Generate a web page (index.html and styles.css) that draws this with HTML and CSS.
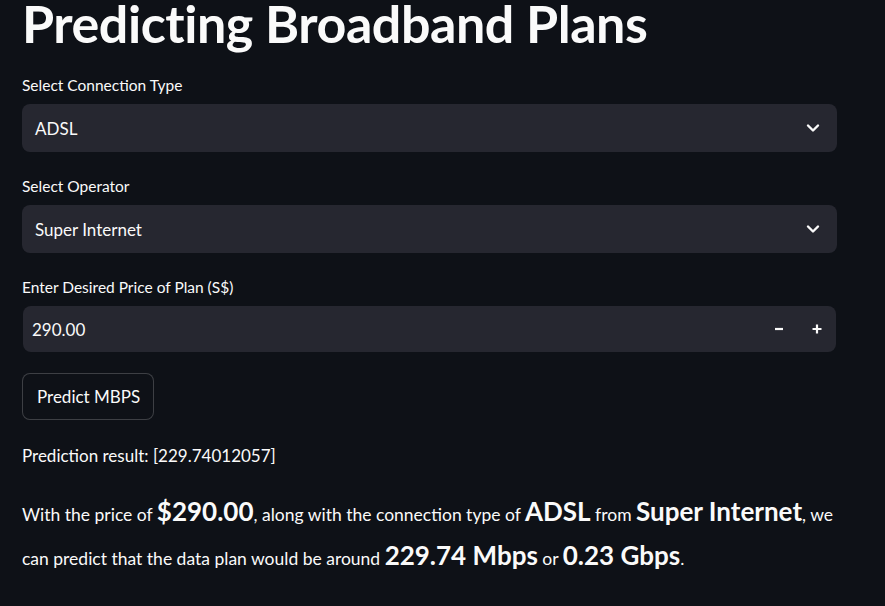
FILE: index.html
```html
<!DOCTYPE html>
<html>
<head>
<meta charset="utf-8">
<link rel="stylesheet" href="styles.css">
</head>
<body>
<main class="app">
  <h1 class="title">Predicting Broadband Plans</h1>

  <div class="field field-first">
    <div class="label">Select Connection Type</div>
    <div class="select">
      <span class="value">ADSL</span>
      <svg class="chev" width="14" height="10" viewBox="0 0 14 10"><path d="M2 2.5 L7 7.5 L12 2.5" fill="none" stroke="#fafafa" stroke-width="2.4" stroke-linecap="round" stroke-linejoin="round"/></svg>
    </div>
  </div>

  <div class="field">
    <div class="label">Select Operator</div>
    <div class="select">
      <span class="value">Super Internet</span>
      <svg class="chev" width="14" height="10" viewBox="0 0 14 10"><path d="M2 2.5 L7 7.5 L12 2.5" fill="none" stroke="#fafafa" stroke-width="2.4" stroke-linecap="round" stroke-linejoin="round"/></svg>
    </div>
  </div>

  <div class="field">
    <div class="label">Enter Desired Price of Plan (S$)</div>
    <div class="number">
      <span class="num-value">290.00</span>
      <div class="steps">
        <span class="step"><svg width="10" height="10" viewBox="0 0 10 10"><path d="M1 5 H9" stroke="#fafafa" stroke-width="2.2"/></svg></span>
        <span class="step"><svg width="10" height="10" viewBox="0 0 10 10"><path d="M0.5 5 H9.5 M5 0.5 V9.5" stroke="#fafafa" stroke-width="2.2"/></svg></span>
      </div>
    </div>
  </div>

  <button class="btn">Predict MBPS</button>

  <p class="result">Prediction result: [229.74012057]</p>

  <p class="summary">With the price of <b class="big">$290.00</b>, along with the connection type of <b class="big">ADSL</b> from <b class="big">Super Internet</b>, we can predict that the data plan would be around <b class="big">229.74 Mbps</b> or <b class="big">0.23 Gbps</b>.</p>
</main>
</body>
</html>
```

FILE: styles.css
```css
html, body {
  margin: 0;
  padding: 0;
  background: #0e1117;
}
body {
  color: #fafafa;
  font-family: "Lato", "Source Sans Pro", sans-serif;
  overflow: hidden;
}
.app {
  width: 815px;
  padding-left: 22px;
}
.title {
  margin: 0;
  font-size: 52px;
  font-weight: 700;
  line-height: 52px;
  height: 49px;
  margin-top: -3px;
  letter-spacing: -0.45px;
}
.field {
  margin-top: 24px;
}
.field-first {
  margin-top: 29px;
}
.label {
  font-size: 15.5px;
  line-height: 20px;
  height: 20px;
  margin-bottom: 9px;
}
.select {
  height: 48px;
  background: #262730;
  border-radius: 8px;
  display: flex;
  align-items: center;
  justify-content: space-between;
  padding: 0 17px 0 13px;
}
.value {
  font-size: 17px;
}
.chev {
  display: block;
}
.number {
  height: 46px;
  margin: 1px 1px 0 1px;
  background: #262730;
  border-radius: 8px;
  display: flex;
  align-items: center;
  justify-content: space-between;
  padding-left: 9px;
}
.num-value {
  font-size: 17px;
}
.steps {
  display: flex;
  height: 100%;
}
.step {
  width: 38px;
  display: flex;
  align-items: center;
  justify-content: center;
}
.btn {
  margin-top: 21px;
  height: 47px;
  padding: 0 13px 0 14px;
  background: #0e1117;
  color: #fafafa;
  border: 1px solid rgba(250, 250, 250, 0.2);
  border-radius: 8px;
  font-family: inherit;
  font-size: 17px;
  display: block;
}
.result {
  margin: 25px 0 0 0;
  font-size: 17px;
  line-height: 22px;
}
.summary {
  margin: 26px 0 0 0;
  font-size: 17.5px;
  line-height: 44px;
  width: 815px;
}
.big {
  font-size: 26px;
  font-weight: 700;
  line-height: 1;
}
```
